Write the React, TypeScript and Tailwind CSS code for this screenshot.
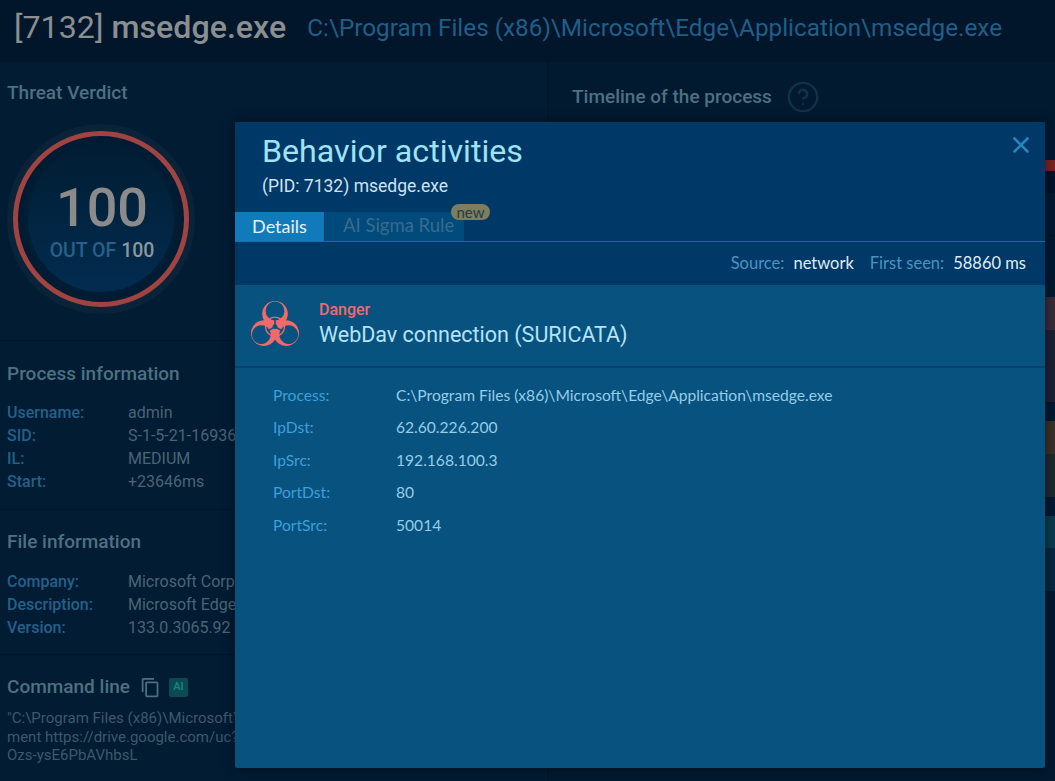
import { CircleHelp, X } from "lucide-react";
import { MdContentCopy } from "react-icons/md";

const processInfo = [
  ["Username:", "admin"],
  ["SID:", "S-1-5-21-169368"],
  ["IL:", "MEDIUM"],
  ["Start:", "+23646ms"],
];

const fileInfo = [
  ["Company:", "Microsoft Corporation"],
  ["Description:", "Microsoft Edge"],
  ["Version:", "133.0.3065.92"],
];

const details = [
  ["Process:", "C:\\Program Files (x86)\\Microsoft\\Edge\\Application\\msedge.exe"],
  ["IpDst:", "62.60.226.200"],
  ["IpSrc:", "192.168.100.3"],
  ["PortDst:", "80"],
  ["PortSrc:", "50014"],
];

const InfoRows = ({ rows }: { rows: string[][] }) => (
  <div className="flex flex-col">
    {rows.map(([label, value]) => (
      <div key={label} className="flex h-[23px] items-center whitespace-nowrap text-[16px]">
        <span className="w-[121px] shrink-0 font-medium text-[#24608a]">{label}</span>
        <span className="text-[#4a6576]">{value}</span>
      </div>
    ))}
  </div>
);

const BiohazardIcon = () => (
  <svg viewBox="0 0 48 46" className="h-[46px] w-[48px] shrink-0">
    {[0, 120, 240].map((angle) => (
      <g key={angle} transform={`rotate(${angle} 24 25.7)`}>
        <path
          fillRule="evenodd"
          fill="#ef6a6c"
          d="M24 0a12.8 12.8 0 1 0 0 25.6a12.8 12.8 0 1 0 0-25.6ZM24 .5a9.4 9.4 0 1 1 0 18.8a9.4 9.4 0 1 1 0-18.8Z"
        />
        <path d="M24 25.7V16" stroke="#07527f" strokeWidth="1.5" />
      </g>
    ))}
    <circle cx="24" cy="25.7" r="9.5" fill="none" stroke="#ef6a6c" strokeWidth="1.3" />
    <circle cx="24" cy="25.7" r="2.4" fill="#07527f" />
  </svg>
);

const Gauge = () => (
  <div className="ml-[7px] mt-[19px] flex h-[190px] w-[188px] items-center justify-center rounded-full bg-[#0a2338]">
    <div className="flex h-[176px] w-[176px] items-center justify-center rounded-full border-[5px] border-[#a04441] bg-[#011c33]">
      <div className="flex h-[146px] w-[146px] flex-col items-center justify-center rounded-full bg-gradient-to-b from-[#011d33] to-[#022c50] pl-[2px] pt-[6px] shadow-[0_0_6px_2px_#012038]">
        <div className="text-[54px] leading-[58px] font-medium text-[#8b8b8b]">100</div>
        <div className="text-[19.5px] leading-[28px] font-medium text-[#25618a]">
          OUT OF <span className="text-[#8d979c]">100</span>
        </div>
      </div>
    </div>
  </div>
);

// strip of the timeline that stays visible to the right of the modal
const TimelineStrip = () => (
  <div className="ml-auto mt-[46px] flex w-[10px] flex-col">
    <div className="h-[11px] bg-[#7a2226]" />
    <div className="h-[22px] bg-[#01142a]" />
    <div className="h-[42px]" />
    <div className="h-px bg-[#01152a]" />
    <div className="h-[61px]" />
    <div className="h-[33px] bg-[#3a2a38]" />
    <div className="h-[72px] bg-[#1d2133]" />
    <div className="h-[19px]" />
    <div className="h-[33px] bg-[#3a3128]" />
    <div className="h-[43px] bg-[#1f2a2e]" />
    <div className="h-[19px]" />
    <div className="h-[32px] bg-[#0c3a50]" />
    <div className="h-[43px] bg-[#05283e]" />
  </div>
);

const Modal = () => (
  <div className="absolute left-[235px] top-[122px] flex h-[646px] w-[810px] flex-col rounded-[2px] bg-[#07527f] font-['Lato',sans-serif] shadow-[0_0_12px_rgba(0,0,0,0.5)]">
    <div className="relative h-[90px] shrink-0 rounded-t-[2px] bg-[#003868] pl-[27px] pt-[9px] font-['Roboto',sans-serif]">
      <div className="text-[32.2px] leading-[40px] text-[#9fe3f5]">Behavior activities</div>
      <div className="mt-[5px] text-[17.5px] leading-[21px] text-[#cfe3ee]">(PID: 7132) msedge.exe</div>
      <button className="absolute right-[11px] top-[10px] text-[#2a84bd]">
        <X size={26} strokeWidth={2.4} />
      </button>
    </div>
    <div className="flex h-[30px] shrink-0 border-b border-[#1070ab] bg-[#003868] text-[18px]">
      <div className="flex w-[89px] items-center justify-center bg-[#117abb] pb-px text-[#e6f3fa]">Details</div>
      <div className="relative ml-px flex w-[139px] items-center bg-[#004a7c] pb-px pl-[18px] text-[18.5px] text-[#3a6a8e]">
        AI Sigma Rule
        <span className="absolute right-[-26px] top-[-8px] flex h-[16px] w-[39px] items-center justify-center rounded-full bg-[#7d7e5f] text-[15px] text-[#2a3b40]">
          new
        </span>
      </div>
    </div>
    <div className="flex h-[43px] shrink-0 items-center justify-end gap-[16px] bg-[#003868] pr-[19px] text-[16.5px]">
      <div className="flex gap-[9px]">
        <span className="text-[#4a94c0]">Source:</span>
        <span className="text-[#dfecf4]">network</span>
      </div>
      <div className="flex gap-[9px]">
        <span className="text-[#4a94c0]">First seen:</span>
        <span className="text-[#dfecf4]">58860 ms</span>
      </div>
    </div>
    <div className="flex h-[83px] shrink-0 items-center border-b-2 border-[#03426f] pb-[3px] pl-[16px] font-['Roboto',sans-serif]">
      <BiohazardIcon />
      <div className="ml-[20px]">
        <div className="text-[16px] leading-[18px] font-medium text-[#ee6b6e]">Danger</div>
        <div className="mt-[3px] text-[21.5px] leading-[26px] text-[#b6e3f7]">WebDav connection (SURICATA)</div>
      </div>
    </div>
    <div className="flex flex-col pl-[38px] pt-[11px] text-[15.6px]">
      {details.map(([label, value]) => (
        <div key={label} className="flex h-[32.5px] items-center">
          <span className="w-[123px] text-[#3f9fd8]">{label}</span>
          <span className="text-[#95cde8]">{value}</span>
        </div>
      ))}
    </div>
  </div>
);

export default function App() {
  return (
    <div className="relative flex h-[781px] w-[1055px] flex-col overflow-hidden bg-[#011a30] font-['Roboto',sans-serif]">
      {/* Header */}
      <div className="flex h-[62px] shrink-0 items-center gap-[21px] whitespace-nowrap bg-[#01152b] pb-[8px] pl-[14px]">
        <div className="text-[32.2px] text-[#8a8f90]">
          [7132] <span className="font-medium">msedge.exe</span>
        </div>
        <div className="mt-[3px] text-[24.3px] text-[#1f5f88]">C:\Program Files (x86)\Microsoft\Edge\Application\msedge.exe</div>
      </div>

      <div className="flex flex-1">
        {/* Left column */}
        <div className="flex w-[548px] shrink-0 flex-col border-r border-[#01142a] bg-[#011c33]">
          <div className="h-[279px] border-b border-[#01152a] pl-[7px] pt-[19px]">
            <h2 className="text-[19px] leading-[24px] font-medium text-[#4d7181]">Threat Verdict</h2>
            <div className="-ml-[7px]">
              <Gauge />
            </div>
          </div>
          <div className="h-[169px] border-b border-[#01152a] pl-[7px] pt-[21px]">
            <h2 className="mb-[15px] text-[19px] leading-[24px] font-medium text-[#4d7181]">Process information</h2>
            <InfoRows rows={processInfo} />
          </div>
          <div className="h-[145px] border-b border-[#01152a] pl-[7px] pt-[20px]">
            <h2 className="mb-[16px] text-[19px] leading-[24px] font-medium text-[#4d7181]">File information</h2>
            <InfoRows rows={fileInfo} />
          </div>
          <div className="pl-[7px] pt-[20px]">
            <div className="flex items-center">
              <h2 className="text-[19px] leading-[24px] font-medium text-[#4d7181]">Command line</h2>
              <MdContentCopy size={21} className="ml-[10px] text-[#4d7181]" />
              <span className="ml-[8px] flex h-[19px] w-[19px] items-center justify-center rounded-[2px] bg-[#0a4a52] text-[11px] font-medium text-[#138a80]">
                AI
              </span>
            </div>
            <div className="mt-[10px] whitespace-nowrap text-[15px] leading-[18.5px] text-[#3e596b]">
              "C:\Program Files (x86)\Microsoft\Edge\Application\msedge.exe" --single-argu
              <br />
              ment https://drive.google.com/uc?id=1YQ2mFxk
              <br />
              Ozs-ysE6PbAVhbsL
            </div>
          </div>
        </div>

        {/* Right column */}
        <div className="flex flex-1 flex-col">
          <div className="flex items-center pl-[24px] pt-[18px]">
            <h2 className="text-[19px] leading-[32px] font-medium text-[#4d7181]">Timeline of the process</h2>
            <CircleHelp size={34} strokeWidth={1.7} className="ml-[14px] text-[#0f3348]" />
          </div>
          <TimelineStrip />
        </div>
      </div>

      <Modal />
    </div>
  );
}
